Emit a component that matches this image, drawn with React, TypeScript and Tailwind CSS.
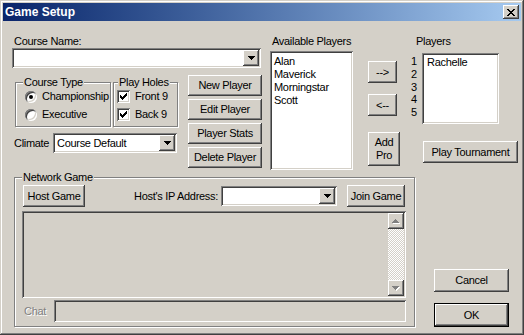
import React from "react";

const RAISED =
  "shadow-[inset_-1px_-1px_0_#404040,inset_1px_1px_0_#ffffff,inset_-2px_-2px_0_#808080,inset_2px_2px_0_#d4d0c8]";
const SUNKEN =
  "shadow-[inset_1px_1px_0_#808080,inset_-1px_-1px_0_#ffffff,inset_2px_2px_0_#404040,inset_-2px_-2px_0_#d4d0c8]";

function Btn({ className = "", children }: { className?: string; children: React.ReactNode }) {
  return (
    <button
      type="button"
      className={`${RAISED} bg-[#d4d0c8] flex items-center justify-center p-0 text-black whitespace-nowrap ${className}`}
    >
      {children}
    </button>
  );
}

function DownArrow() {
  return (
    <svg width="7" height="4" viewBox="0 0 7 4" shapeRendering="crispEdges">
      <path d="M0 0h7v1H0zM1 1h5v1H1zM2 2h3v1H2zM3 3h1v1H3z" fill="#000" />
    </svg>
  );
}

function Combo({ className = "", text = "" }: { className?: string; text?: string }) {
  return (
    <div className={`${SUNKEN} bg-white flex p-[2px] ${className}`}>
      <div className="flex-1 flex items-center pl-[2px] whitespace-nowrap overflow-hidden">{text}</div>
      <div className={`${RAISED} bg-[#d4d0c8] w-[16px] flex items-center justify-center`}>
        <DownArrow />
      </div>
    </div>
  );
}

function Group({
  label,
  labelPos,
  className = "",
  children,
}: {
  label: string;
  labelPos: string;
  className?: string;
  children?: React.ReactNode;
}) {
  return (
    <div
      className={`relative border border-[#808080] shadow-[inset_1px_1px_0_#ffffff,1px_1px_0_#ffffff] ${className}`}
    >
      <span className={`absolute top-[-7px] ${labelPos} bg-[#d4d0c8] px-[1px] leading-[13px] whitespace-nowrap`}>
        {label}
      </span>
      {children}
    </div>
  );
}

function Radio({ checked, label }: { checked?: boolean; label: string }) {
  return (
    <div className="flex items-center h-[13px]">
      <div className={`${SUNKEN} w-[12px] h-[12px] rounded-full bg-white flex items-center justify-center`}>
        {checked && <div className="w-[4px] h-[4px] rounded-full bg-black" />}
      </div>
      <span className="ml-[5px] whitespace-nowrap">{label}</span>
    </div>
  );
}

function Check({ label }: { label: string }) {
  return (
    <div className="flex items-center h-[13px]">
      <div className={`${SUNKEN} w-[13px] h-[13px] bg-white flex items-center justify-center`}>
        <svg width="7" height="7" viewBox="0 0 7 7" shapeRendering="crispEdges">
          <path
            d="M6 0h1v1H6zM5 1h2v1H5zM0 2h1v1H0zM4 2h3v1H4zM0 3h2v1H0zM3 3h3v1H3zM0 4h5v1H0zM1 5h3v1H1zM2 6h1v1H2z"
            fill="#000"
          />
        </svg>
      </div>
      <span className="ml-[5px] whitespace-nowrap">{label}</span>
    </div>
  );
}

function GrayArrow({ up }: { up?: boolean }) {
  const d = up
    ? "M3 0h1v1H3zM2 1h3v1H2zM1 2h5v1H1zM0 3h7v1H0z"
    : "M0 0h7v1H0zM1 1h5v1H1zM2 2h3v1H2zM3 3h1v1H3z";
  return (
    <svg width="8" height="5" viewBox="0 0 8 5" shapeRendering="crispEdges">
      <path d={d} fill="#ffffff" transform="translate(1,1)" />
      <path d={d} fill="#808080" />
    </svg>
  );
}

export default function App() {
  return (
    <div
      className={`w-[524px] h-[335px] bg-[#d4d0c8] p-[3px] flex flex-col shadow-[inset_-1px_-1px_0_#404040,inset_1px_1px_0_#d4d0c8,inset_-2px_-2px_0_#808080,inset_2px_2px_0_#ffffff] font-['Liberation_Sans',Arial,sans-serif] text-[11px] leading-[13px] tracking-[-0.3px] text-black`}
    >
      {/* Title bar */}
      <div className="h-[18px] flex items-center bg-linear-to-r from-[#0a246a] to-[#a6caf0] pl-[2px] pr-[2px]">
        <span className="flex-1 text-white font-bold text-[12px] tracking-[0px] leading-[18px]">Game Setup</span>
        <button
          type="button"
          className={`${RAISED} bg-[#d4d0c8] w-[16px] h-[14px] flex items-center justify-center p-0`}
        >
          <svg width="8" height="7" viewBox="0 0 8 7" shapeRendering="crispEdges">
            <path
              d="M0 0h2v1H0zM6 0h2v1H6zM1 1h2v1H1zM5 1h2v1H5zM2 2h4v1H2zM3 3h2v1H3zM2 4h4v1H2zM1 5h2v1H1zM5 5h2v1H5zM0 6h2v1H0zM6 6h2v1H6z"
              fill="#000"
            />
          </svg>
        </button>
      </div>

      {/* Body */}
      <div className="flex flex-col pt-[14px]">
        {/* Top row */}
        <div className="flex h-[135px]">
          {/* Column A */}
          <div className="ml-[9px] w-[250px] flex flex-col">
            <div className="pl-[2px] h-[13px] whitespace-nowrap">Course Name:</div>
            <Combo className="w-[249px] h-[20px]" />
            <div className="flex mt-[7px]">
              <div className="w-[166px] flex flex-col">
                <div className="flex mt-[7px] ml-[3px] gap-[2px]">
                  <Group label="Course Type" labelPos="left-[7px]" className="w-[96px] h-[45px]">
                    <div className="flex flex-col gap-[5px] pl-[9px] pt-[7px]">
                      <Radio checked label="Championship" />
                      <Radio label="Executive" />
                    </div>
                  </Group>
                  <Group label="Play Holes" labelPos="left-[4px]" className="w-[65px] h-[45px]">
                    <div className="flex flex-col gap-[5px] pl-[3px] pt-[7px]">
                      <Check label="Front 9" />
                      <Check label="Back 9" />
                    </div>
                  </Group>
                </div>
                <div className="flex items-center mt-[6px]">
                  <span className="pl-[2px] w-[41px]">Climate</span>
                  <Combo className="w-[124px] h-[20px]" text="Course Default" />
                </div>
              </div>
              <div className="ml-[10px] w-[74px] flex flex-col gap-[3px]">
                <Btn className="w-[74px] h-[21px]">New Player</Btn>
                <Btn className="w-[74px] h-[21px]">Edit Player</Btn>
                <Btn className="w-[74px] h-[21px]">Player Stats</Btn>
                <Btn className="w-[74px] h-[21px]">Delete Player</Btn>
              </div>
            </div>
          </div>

          {/* Column B */}
          <div className="ml-[8px] w-[83px] flex flex-col">
            <div className="pl-[2px] h-[13px] whitespace-nowrap">Available Players</div>
            <div className={`${SUNKEN} mt-[3px] h-[119px] bg-white pl-[4px] pt-[4px] flex flex-col`}>
              <div>Alan</div>
              <div>Maverick</div>
              <div>Morningstar</div>
              <div>Scott</div>
            </div>
          </div>

          {/* Column C */}
          <div className="ml-[15px] w-[32px] flex flex-col">
            <Btn className="mt-[26px] w-[29px] h-[22px]">{"-->"}</Btn>
            <Btn className="mt-[11px] w-[29px] h-[22px]">{"<--"}</Btn>
            <Btn className="mt-[16px] w-[32px] h-[34px] flex-col leading-[13px]">
              <span>Add</span>
              <span>Pro</span>
            </Btn>
          </div>

          {/* Column D */}
          <div className="ml-[8px] w-[110px] flex flex-col">
            <div className="pl-[8px] h-[13px]">Players</div>
            <div className="flex mt-[5px]">
              <div className="w-[14px] pl-[3px] pt-[2px] leading-[12.75px] flex flex-col">
                <span>1</span>
                <span>2</span>
                <span>3</span>
                <span>4</span>
                <span>5</span>
              </div>
              <div className={`${SUNKEN} w-[77px] h-[71px] bg-white pl-[5px] pt-[3px]`}>
                <div>Rachelle</div>
              </div>
            </div>
            <Btn className="ml-[15px] mt-[17px] w-[95px] h-[22px]">Play Tournament</Btn>
          </div>
        </div>

        {/* Bottom row */}
        <div className="flex">
          <Group label="Network Game" labelPos="left-[7px]" className="ml-[11px] mt-[7px] w-[401px] h-[150px]">
            <div className="flex flex-col pl-[7px] pt-[7px]">
              <div className="flex items-center">
                <Btn className="ml-[1px] w-[62px] h-[22px]">Host Game</Btn>
                <span className="w-[133px] text-right whitespace-nowrap">Host's IP Address:</span>
                <Combo className="ml-[3px] w-[116px] h-[20px]" />
                <Btn className="ml-[10px] w-[58px] h-[22px]">Join Game</Btn>
              </div>
              <div className={`${SUNKEN} mt-[4px] w-[384px] h-[87px] bg-[#d4d0c8] p-[2px] flex justify-end`}>
                <div className="w-[16px] flex flex-col">
                  <div className={`${RAISED} bg-[#d4d0c8] h-[16px] flex items-center justify-center`}>
                    <GrayArrow up />
                  </div>
                  <div className="flex-1 bg-[repeating-conic-gradient(#ffffff_0_25%,#d4d0c8_0_50%)] bg-[length:2px_2px]" />
                  <div className={`${RAISED} bg-[#d4d0c8] h-[16px] flex items-center justify-center`}>
                    <GrayArrow />
                  </div>
                </div>
              </div>
              <div className="flex items-center mt-[2px]">
                <span className="pl-[2px] w-[32px] text-[#808080] [text-shadow:1px_1px_0_#ffffff]">Chat</span>
                <div className={`${SUNKEN} w-[352px] h-[22px] bg-[#d4d0c8]`} />
              </div>
            </div>
          </Group>

          <div className="ml-[19px] w-[75px] flex flex-col">
            <Btn className="mt-[99px] w-[75px] h-[23px]">Cancel</Btn>
            <button type="button" className="mt-[11px] w-[75px] h-[24px] border border-black p-0 flex">
              <div className={`${RAISED} bg-[#d4d0c8] flex-1 flex items-center justify-center`}>OK</div>
            </button>
          </div>
        </div>
      </div>
    </div>
  );
}
